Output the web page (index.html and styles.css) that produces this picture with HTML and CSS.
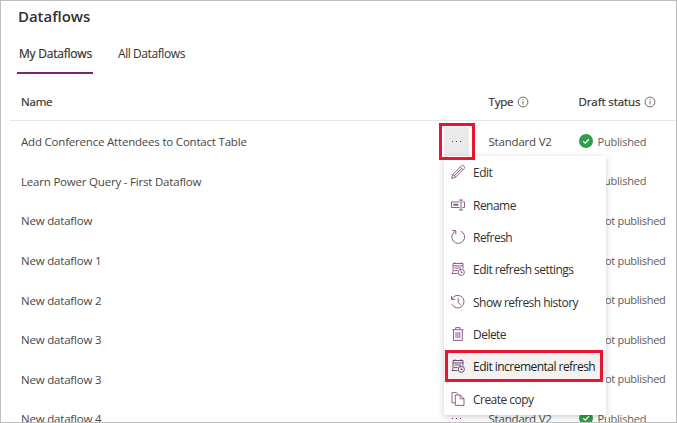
FILE: index.html
```html
<!DOCTYPE html>
<html lang="en">
<head>
<meta charset="utf-8">
<title>Dataflows</title>
<link rel="stylesheet" href="styles.css">
</head>
<body>
<svg width="0" height="0" class="defs">
  <symbol id="info" viewBox="0 0 12 12"><circle cx="6" cy="6" r="4.9"/><path d="M6 5.2v3.4M6 3.2v1"/></symbol>
  <symbol id="ok" viewBox="0 0 14 14"><circle cx="7" cy="7" r="7" fill="#2f9e4c" stroke="none"/><path d="M4.2 7.2l2 1.9 3.7-3.8" stroke="#fff" stroke-width="1.3"/></symbol>
  <symbol id="calendar" viewBox="0 0 14 14"><path d="M6.5 11.5H1L2 9.5V1.5h10v5M2 3.9h10M4 .3v1.4M10 .3v1.4M3.5 6h6.5M3 8.6h3.6"/><circle cx="10.3" cy="10.3" r="3.1"/><path d="M10.1 8.5v2h1.6"/></symbol>
</svg>
<main class="page">
  <h1>Dataflows</h1>
  <nav class="tabs"><a class="tab active"><span>My Dataflows</span></a><a class="tab"><span>All Dataflows</span></a></nav>
  <section class="table">
    <div class="row head"><div>Name</div><div></div><div class="type">Type <svg class="info"><use href="#info"/></svg></div><div class="draft">Draft status <svg class="info"><use href="#info"/></svg></div></div>
    <div class="row"><div>Add Conference Attendees to Contact Table</div><div class="more open"><i></i><i></i><i></i></div><div>Standard V2</div><div class="status"><svg class="ok"><use href="#ok"/></svg>Published</div></div>
    <div class="row"><div>Learn Power Query - First Dataflow</div><div></div><div></div><div class="status"><svg class="ok"><use href="#ok"/></svg>Published</div></div>
    <div class="row"><div>New dataflow</div><div></div><div></div><div class="status not">Not published</div></div>
    <div class="row"><div>New dataflow 1</div><div></div><div></div><div class="status not">Not published</div></div>
    <div class="row"><div>New dataflow 2</div><div></div><div></div><div class="status not">Not published</div></div>
    <div class="row"><div>New dataflow 3</div><div></div><div></div><div class="status not">Not published</div></div>
    <div class="row"><div>New dataflow 3</div><div></div><div></div><div class="status not">Not published</div></div>
    <div class="row"><div>New dataflow 4</div><div class="more"><i></i><i></i><i></i></div><div>Standard V2</div><div class="status"><svg class="ok"><use href="#ok"/></svg>Published</div></div>
  </section>
  <div class="menu">
    <div class="item"><svg viewBox="0 0 14 14"><path d="M.6 13.4l1-3.7L10.4 1c.8-.8 1.7-.6 2.5.1.9.9.9 1.8.1 2.6L4.3 12.4zM1.6 9.7c1.5.2 2.5 1.2 2.7 2.7M9.2 2.2l2.6 2.6M3 11l7.6-7.5"/></svg><span>Edit</span></div>
    <div class="item"><svg viewBox="0 0 14 14"><path d="M8.5 4H.5v5.5h8M11.5 4h2v5.5h-2M8 2h4M8 12h4M10 2v10"/><path d="M2.3 6.75h5" stroke-width="1.8"/></svg><span>Rename</span></div>
    <div class="item"><svg viewBox="0 0 14 14"><path d="M4.5 1.2A6.4 6.4 0 1 0 9.7 1.1M1 .6h3.8v3.8"/></svg><span>Refresh</span></div>
    <div class="item"><svg><use href="#calendar"/></svg><span>Edit refresh settings</span></div>
    <div class="item"><svg viewBox="0 0 14 14"><path d="M.9 4.2A6.3 6.3 0 1 1 1 9.3M.5 1v3.5H4M7.2 3.2v4.3L9.8 10"/></svg><span>Show refresh history</span></div>
    <div class="item"><svg viewBox="0 0 14 14"><path d="M1.3 2.7h11.2M4.7 2.7V.6H9v2.1M2.5 2.7v10.7h8.8V2.7M5 5v6.2M6.9 5v6.2M8.8 5v6.2"/></svg><span>Delete</span></div>
    <div class="item hover"><svg><use href="#calendar"/></svg><span>Edit incremental refresh</span></div>
    <div class="item"><svg viewBox="0 0 14 14"><path d="M4 10.8H1V.6h4.4l2 2M4.3 3h5l3.7 3.7v6.7H4.3zM9.2 3v3.8H13"/></svg><span>Create copy</span></div>
  </div>
  <div class="mark mark-more"></div>
  <div class="mark mark-item"></div>
</main>
</body>
</html>
```
FILE: styles.css
```css
* { box-sizing: border-box; }
body { margin: 0; background: #fff; font-family: "Open Sans", "Noto Sans", sans-serif; font-size: 11.5px; color: #484644; }
svg { fill: none; stroke: #854b85; stroke-width: .9; flex: none; }
.defs { position: absolute; }
.page { position: relative; width: 677px; height: 423px; overflow: hidden; border: 1px solid #bdbdbd; }
h1 { margin: 4px 0 0 17px; font-size: 15px; line-height: 22px; font-weight: 600; letter-spacing: -.05px; color: #323130; }
.tabs { display: flex; gap: 24px; margin: 15px 0 0 16px; height: 32px; font-size: 12px; color: #323130; }
.tab { height: 32px; line-height: 23px; white-space: nowrap; letter-spacing: -.42px; }
.tab.active { width: 76px; padding-left: 2px; border-bottom: 2px solid #742774; letter-spacing: -.22px; -webkit-text-stroke: .2px #323130; }
.tab:last-child { padding-left: 1px; }
.table { margin-left: 9px; }
.row { display: grid; grid-template-columns: 434px 44.5px 90px 1fr; align-items: center; height: 39.6px; white-space: nowrap; letter-spacing: -.2px; }
.row > div:first-child { padding-left: 11px; }
.row.head { height: 47px; padding-top: 9px; border-bottom: 1px solid #e6e6e6; margin-bottom: 1px; color: #323130; -webkit-text-stroke: .2px #323130; }
.head > div { display: flex; align-items: center; gap: 4px; }
.head .draft { letter-spacing: -.1px; }
.info { width: 12px; height: 12px; stroke: #605e5c; }
.status { display: flex; align-items: center; gap: 5px; font-size: 11px; color: #605e5c; padding-bottom: 1px; }
.not { padding-left: 18.5px; letter-spacing: -.3px; }
.ok { width: 14px; height: 14px; }
.more { width: 25px; height: 29px; display: flex; align-items: center; justify-content: center; gap: 3px; }
.more.open { background: #eaeaea; }
.more i { width: 1px; height: 1px; background: #742774; }
.menu { position: absolute; left: 443px; top: 155px; width: 162px; height: 259px; background: #fff; box-shadow: 0 2px 7px rgba(0,0,0,.2); display: grid; grid-template-rows: repeat(8, 32.35px); font-size: 12px; letter-spacing: -.53px; color: #323130; }
.item { display: flex; align-items: center; gap: 8px; padding: 1px 0 0 7px; white-space: nowrap; }
.item svg { width: 14px; height: 14px; margin-top: -1px; }
.item.hover { background: #f3f2f1; color: #201f1e; }
.item.hover svg { stroke: #5a3a66; }
.mark { position: absolute; border: 3px solid #e9142f; }
.mark-more { left: 438px; top: 122px; width: 36px; height: 37px; }
.mark-item { left: 444px; top: 349px; width: 158px; height: 32px; }
```
